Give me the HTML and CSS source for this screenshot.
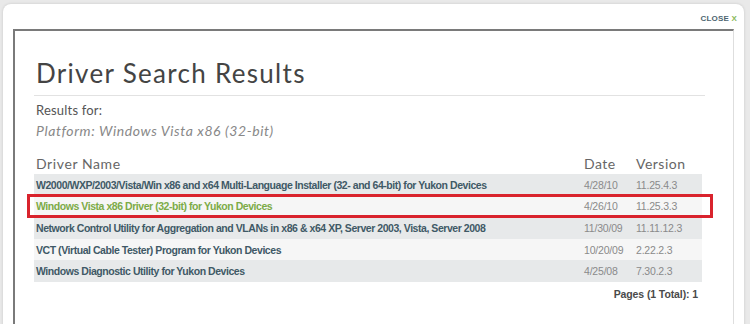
FILE: index.html
```html
<!DOCTYPE html>
<html lang="en">
<head>
    <meta charset="UTF-8">
    <meta name="viewport" content="width=device-width, initial-scale=1.0">
    <title>Driver Search Results</title>
    <link rel="stylesheet" href="styles.css">
</head>
<body>
    <div class="modal">
        <div class="modal-top">
            <a class="close" href="#">CLOSE <span>X</span></a>
        </div>
        <div class="panel">
            <h1 class="title">Driver Search Results</h1>
            <p class="label">Results for:</p>
            <p class="platform">Platform: Windows Vista x86 (32-bit)</p>

            <div class="results">
                <div class="row head">
                    <div class="name">Driver Name</div>
                    <div class="date">Date</div>
                    <div class="ver">Version</div>
                </div>
                <div class="row">
                    <div class="name">W2000/WXP/2003/Vista/Win x86 and x64 Multi-Language Installer (32- and 64-bit) for Yukon Devices</div>
                    <div class="date">4/28/10</div>
                    <div class="ver">11.25.4.3</div>
                </div>
                <div class="row sel">
                    <div class="name">Windows Vista x86 Driver (32-bit) for Yukon Devices</div>
                    <div class="date">4/26/10</div>
                    <div class="ver">11.25.3.3</div>
                </div>
                <div class="row">
                    <div class="name">Network Control Utility for Aggregation and VLANs in x86 &amp; x64 XP, Server 2003, Vista, Server 2008</div>
                    <div class="date">11/30/09</div>
                    <div class="ver">11.11.12.3</div>
                </div>
                <div class="row">
                    <div class="name">VCT (Virtual Cable Tester) Program for Yukon Devices</div>
                    <div class="date">10/20/09</div>
                    <div class="ver">2.22.2.3</div>
                </div>
                <div class="row">
                    <div class="name">Windows Diagnostic Utility for Yukon Devices</div>
                    <div class="date">4/25/08</div>
                    <div class="ver">7.30.2.3</div>
                </div>
                <div class="mark"></div>
            </div>
            <p class="pages">Pages (1 Total): 1</p>
        </div>
    </div>
</body>
</html>
```

FILE: styles.css
```css
* { margin:0; padding:0; box-sizing:border-box;}
html, body { height:100%; overflow:hidden;}
body { background-color:#e9e9e9; padding:4px 0 0 3px; font-family:"Liberation Sans", Arial, sans-serif;}

.modal { width:741px; height:340px; background-color:#fff; border-radius:8px 8px 0 0; box-shadow:0 0 3px rgba(0,0,0,0.15);}
.modal-top { height:25px; display:flex; justify-content:flex-end; align-items:center; padding:0 7px 0 0;}
.close { font-size:8px; font-weight:bold; color:#4d6470; text-decoration:none; letter-spacing:0.2px; padding-top:3px;}
.close span { color:#8ab85a;}

.panel { margin-left:10px; width:721px; height:320px; border-top:2px solid #7a7a7a; border-left:2px solid #7a7a7a; border-right:1px solid #dedede; padding:27px 31px 0 19px;}

.title { font-family:Lato, "Open Sans", sans-serif; font-weight:400; font-size:26px; line-height:31px; color:#444; padding:0 0 6px 2px; border-bottom:1px solid #e2e2e2; margin-right:-3px; letter-spacing:1.3px;}
.label { font-family:Lato, "Open Sans", sans-serif; font-size:13px; color:#555; padding:6px 0 0 2px; line-height:16px; letter-spacing:0.2px;}
.platform { font-family:Lato, "Open Sans", sans-serif; font-style:italic; font-size:14px; color:#888; padding:5px 0 0 2px; line-height:16px; letter-spacing:0.6px;}

.results { position:relative; margin-top:13px;}
.row { display:flex; height:21.6px; align-items:center; font-size:10.5px; background-color:#f6f6f6;}
.row:nth-child(even) { background-color:#e7e9ea;}
.row .name { flex:1; font-weight:bold; color:#3f5966; padding-left:2px; white-space:nowrap; letter-spacing:-0.45px;}
.row .date { width:52px; color:#8a8a8a; letter-spacing:-0.2px;}
.row .ver { width:66px; color:#8a8a8a; letter-spacing:-0.2px;}
.row:last-of-type { border-bottom:1px solid #dcdcdc;}
.row.sel .name { color:#7cab47;}

.row.head { background-color:#fff; height:22px; font-family:Lato, "Open Sans", sans-serif; font-size:14px; letter-spacing:0.5px;}
.row.head .name { font-weight:400; color:#666; letter-spacing:0.6px;}
.row.head .date, .row.head .ver { color:#666; letter-spacing:0.5px;}

.mark { position:absolute; left:-7px; top:42px; width:686px; height:24px; border:3px solid #d9232d;}

.pages { text-align:right; font-size:10.5px; font-weight:bold; color:#4a4a4a; padding:6px 4px 0 0; letter-spacing:-0.1px;}
```
